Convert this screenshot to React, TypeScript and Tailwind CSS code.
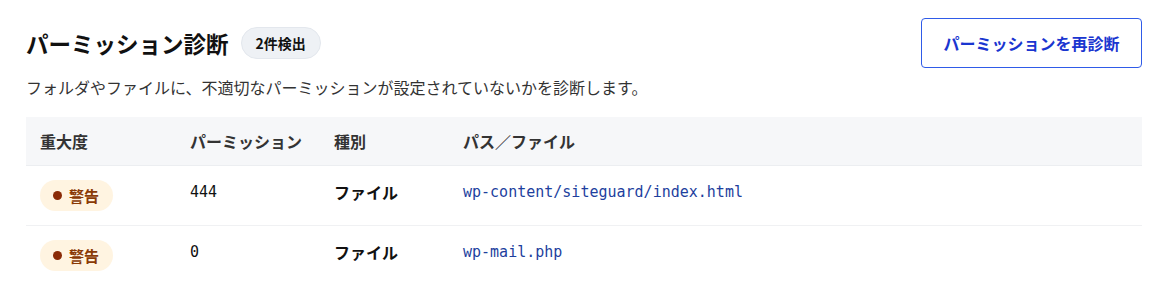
import React from "react";

const jp = { fontFamily: '"Noto Sans CJK JP", "Noto Sans", sans-serif' };
const mono = { fontFamily: '"DejaVu Sans Mono", "Liberation Mono", monospace' };

const rows = [
  { perm: "444", kind: "ファイル", path: "wp-content/siteguard/index.html" },
  { perm: "0", kind: "ファイル", path: "wp-mail.php" },
];

function Warn() {
  return (
    <span className="inline-flex h-[31px] items-center gap-[7px] rounded-full bg-[#fff4e1] pl-[13px] pr-[14px] text-[15px] font-bold leading-none text-[#8a3a06]">
      <span className="h-[9px] w-[9px] rounded-full bg-[#8a2a06]" />
      警告
    </span>
  );
}

export default function App() {
  return (
    <div className="w-[1160px] h-[305px] bg-white pl-[26px] pr-[18px] pt-[18px]" style={jp}>
      <div className="flex items-center justify-between">
        <div className="flex items-center gap-[12px]">
          <h1 className="text-[22.5px] font-bold leading-none text-[#111]">パーミッション診断</h1>
          <span className="inline-flex h-[32px] items-center rounded-full border border-[#e3e7ed] bg-[#eef1f5] px-[14px] text-[14px] font-bold text-[#111]">
            2件検出
          </span>
        </div>
        <button className="h-[50px] w-[221px] rounded-[4px] border border-[#2f5be8] bg-white text-[16px] font-bold text-[#1a36d0]">
          パーミッションを再診断
        </button>
      </div>
      <p className="mt-[7px] text-[16px] leading-[24px] text-[#333]">
        フォルダやファイルに、不適切なパーミッションが設定されていないかを診断します。
      </p>
      <div className="mt-[18px]">
        <div className="flex h-[49px] items-center border-b border-[#eceef1] bg-[#f6f7f9] text-[16px] font-semibold text-[#333]">
          <div className="w-[150px] pl-[14px]">重大度</div>
          <div className="w-[144px] pl-[14px]">パーミッション</div>
          <div className="w-[129px] pl-[14px]">種別</div>
          <div className="flex-1 pl-[14px]">パス／ファイル</div>
        </div>
        {rows.map((r, i) => (
          <div
            key={i}
            className={`flex items-start py-[14px] ${i === 0 ? "border-b border-[#f0f1f3]" : ""}`}
          >
            <div className="w-[150px] pl-[14px]">
              <Warn />
            </div>
            <div className="w-[144px] pl-[14px] text-[15px] leading-[24px] text-[#111]" style={mono}>
              {r.perm}
            </div>
            <div className="w-[129px] pl-[14px] text-[16px] font-bold leading-[24px] text-[#111]">{r.kind}</div>
            <div className="flex-1 pl-[14px] text-[15px] leading-[24px] text-[#1e3f9e]" style={mono}>
              {r.path}
            </div>
          </div>
        ))}
      </div>
    </div>
  );
}
